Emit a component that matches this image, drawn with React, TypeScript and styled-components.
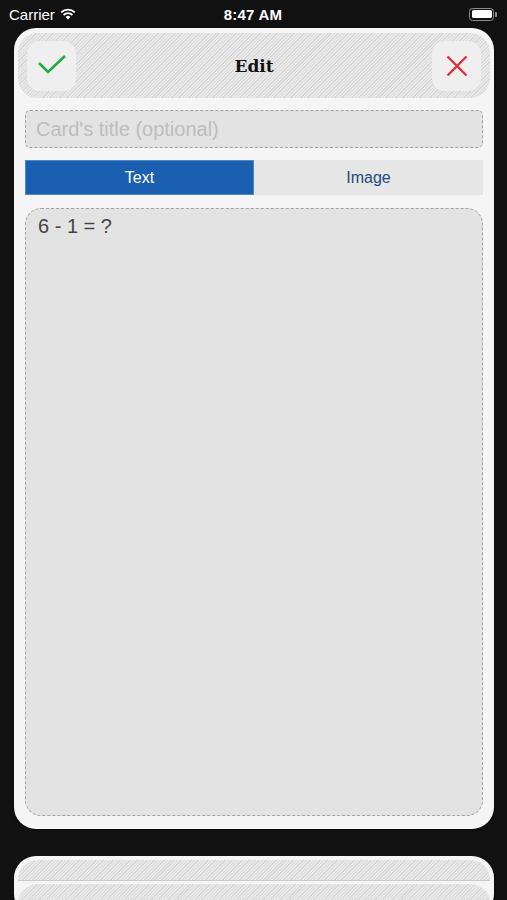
import React from "react";
import styled, { createGlobalStyle } from "styled-components";

const GlobalStyle = createGlobalStyle`
  *, *::before, *::after {
    box-sizing: border-box;
  }
  html, body {
    margin: 0;
    padding: 0;
    background: #111111;
  }
  body {
    font-family: "Liberation Sans", Arial, sans-serif;
  }
`;

const hatch = `
  background-color: #e9e9e9;
  background-image: repeating-linear-gradient(
    -45deg,
    #e9e9e9 0px,
    #e9e9e9 1.4px,
    #d9d9d9 1.4px,
    #d9d9d9 2.4px
  );
`;

const Screen = styled.div`
  width: 507px;
  height: 900px;
  overflow: hidden;
  background: #111111;
`;

const StatusBar = styled.div`
  height: 28px;
  display: grid;
  grid-template-columns: 1fr auto 1fr;
  align-items: center;
  padding: 0 10px 0 9px;
  color: #ffffff;
  font-size: 15px;
`;

const Carrier = styled.div`
  display: flex;
  align-items: center;
  gap: 5px;
`;

const Time = styled.div`
  font-weight: 700;
  letter-spacing: 0.2px;
`;

const Battery = styled.div`
  justify-self: end;
  display: flex;
  align-items: center;
  gap: 1px;
`;

const BatteryBody = styled.div`
  width: 25px;
  height: 13px;
  border: 1.5px solid #8c8c8c;
  border-radius: 3.5px;
  padding: 1.5px;
  display: flex;
`;

const BatteryFill = styled.div`
  flex: 1;
  background: #ffffff;
  border-radius: 1.5px;
`;

const BatteryCap = styled.div`
  width: 2px;
  height: 5px;
  background: #8c8c8c;
  border-radius: 0 1px 1px 0;
`;

const Card = styled.div`
  margin: 0 13px 0 14px;
  background: #f5f5f5;
  border-radius: 22px;
  padding: 5px 4px 13px;
  box-shadow: 0 1px 2px rgba(0, 0, 0, 0.5);
`;

const Header = styled.div`
  ${hatch}
  height: 65px;
  border-radius: 20px;
  display: flex;
  align-items: center;
  justify-content: space-between;
  padding: 0 9px;
`;

const IconButton = styled.button`
  width: 49px;
  height: 50px;
  border: none;
  border-radius: 13px;
  background: #efefef;
  display: flex;
  align-items: center;
  justify-content: center;
  padding: 0;
`;

const Title = styled.div`
  font-family: "DejaVu Serif", "Liberation Serif", serif;
  font-weight: 700;
  font-size: 17px;
  color: #111111;
`;

const Body = styled.div`
  display: flex;
  flex-direction: column;
  gap: 12px;
  padding: 12px 7px 0;
`;

const TitleInput = styled.div`
  height: 38px;
  background: #e3e3e3;
  border: 1.5px dashed #a5a5a5;
  border-radius: 5px;
  display: flex;
  align-items: center;
  padding: 0 10px;
  font-size: 20px;
  color: #bdbdbd;
`;

const Tabs = styled.div`
  display: grid;
  grid-template-columns: 1fr 1fr;
  height: 35px;
  background: #e6e6e6;
`;

const Tab = styled.div<{ active?: boolean }>`
  display: flex;
  align-items: center;
  justify-content: center;
  font-size: 16px;
  color: ${(p) => (p.active ? "#ffffff" : "#1f4a7c")};
  background: ${(p) => (p.active ? "#1b5fb1" : "transparent")};
  border: ${(p) => (p.active ? "1px solid #4f88c9" : "none")};
`;

const TextArea = styled.div`
  height: 608px;
  margin-top: 1px;
  background: #e3e3e3;
  border: 1.5px dashed #a5a5a5;
  border-radius: 16px;
  padding: 6px 12px;
  font-size: 20px;
  color: #444444;
`;

const NextCard = styled.div`
  margin: 27px 13px 0 14px;
  background: #f5f5f5;
  border-radius: 22px;
  padding: 4px 4px 0;
  height: 60px;
  box-shadow: 0 1px 2px rgba(0, 0, 0, 0.5);
`;

const Layer = styled.div`
  ${hatch}
  height: 21px;
  border-radius: 20px 20px 0 0;
  border-bottom: 1.5px solid #c9c9c9;
`;

const LayerBelow = styled.div`
  ${hatch}
  margin-top: 2px;
  height: 40px;
  border-radius: 20px 20px 0 0;
  border-top: 1px solid #f8f8f8;
`;

const Wifi = () => (
  <svg width="16" height="12" viewBox="0 0 16 12">
    <path d="M8 11.5 L5.6 9 A3.4 3.4 0 0 1 10.4 9 Z" fill="#fff" />
    <path
      d="M3.6 7 A6.2 6.2 0 0 1 12.4 7"
      stroke="#fff"
      strokeWidth="1.8"
      fill="none"
    />
    <path
      d="M1.2 4.4 A9.6 9.6 0 0 1 14.8 4.4"
      stroke="#fff"
      strokeWidth="1.8"
      fill="none"
    />
  </svg>
);

const Check = () => (
  <svg width="30" height="22" viewBox="0 0 30 22">
    <polyline
      points="2,8 11,17 28,1"
      fill="none"
      stroke="#27a844"
      strokeWidth="2.6"
    />
  </svg>
);

const Cross = () => (
  <svg width="22" height="22" viewBox="0 0 22 22">
    <path
      d="M1.5 1.5 L20.5 20.5 M20.5 1.5 L1.5 20.5"
      stroke="#e0303a"
      strokeWidth="2.4"
      fill="none"
    />
  </svg>
);

export default function App() {
  return (
    <Screen>
      <GlobalStyle />
      <StatusBar>
        <Carrier>
          Carrier
          <Wifi />
        </Carrier>
        <Time>8:47 AM</Time>
        <Battery>
          <BatteryBody>
            <BatteryFill />
          </BatteryBody>
          <BatteryCap />
        </Battery>
      </StatusBar>

      <Card>
        <Header>
          <IconButton>
            <Check />
          </IconButton>
          <Title>Edit</Title>
          <IconButton>
            <Cross />
          </IconButton>
        </Header>
        <Body>
          <TitleInput>Card's title (optional)</TitleInput>
          <Tabs>
            <Tab active>Text</Tab>
            <Tab>Image</Tab>
          </Tabs>
          <TextArea>6 - 1 = ?</TextArea>
        </Body>
      </Card>

      <NextCard>
        <Layer />
        <LayerBelow />
      </NextCard>
    </Screen>
  );
}
